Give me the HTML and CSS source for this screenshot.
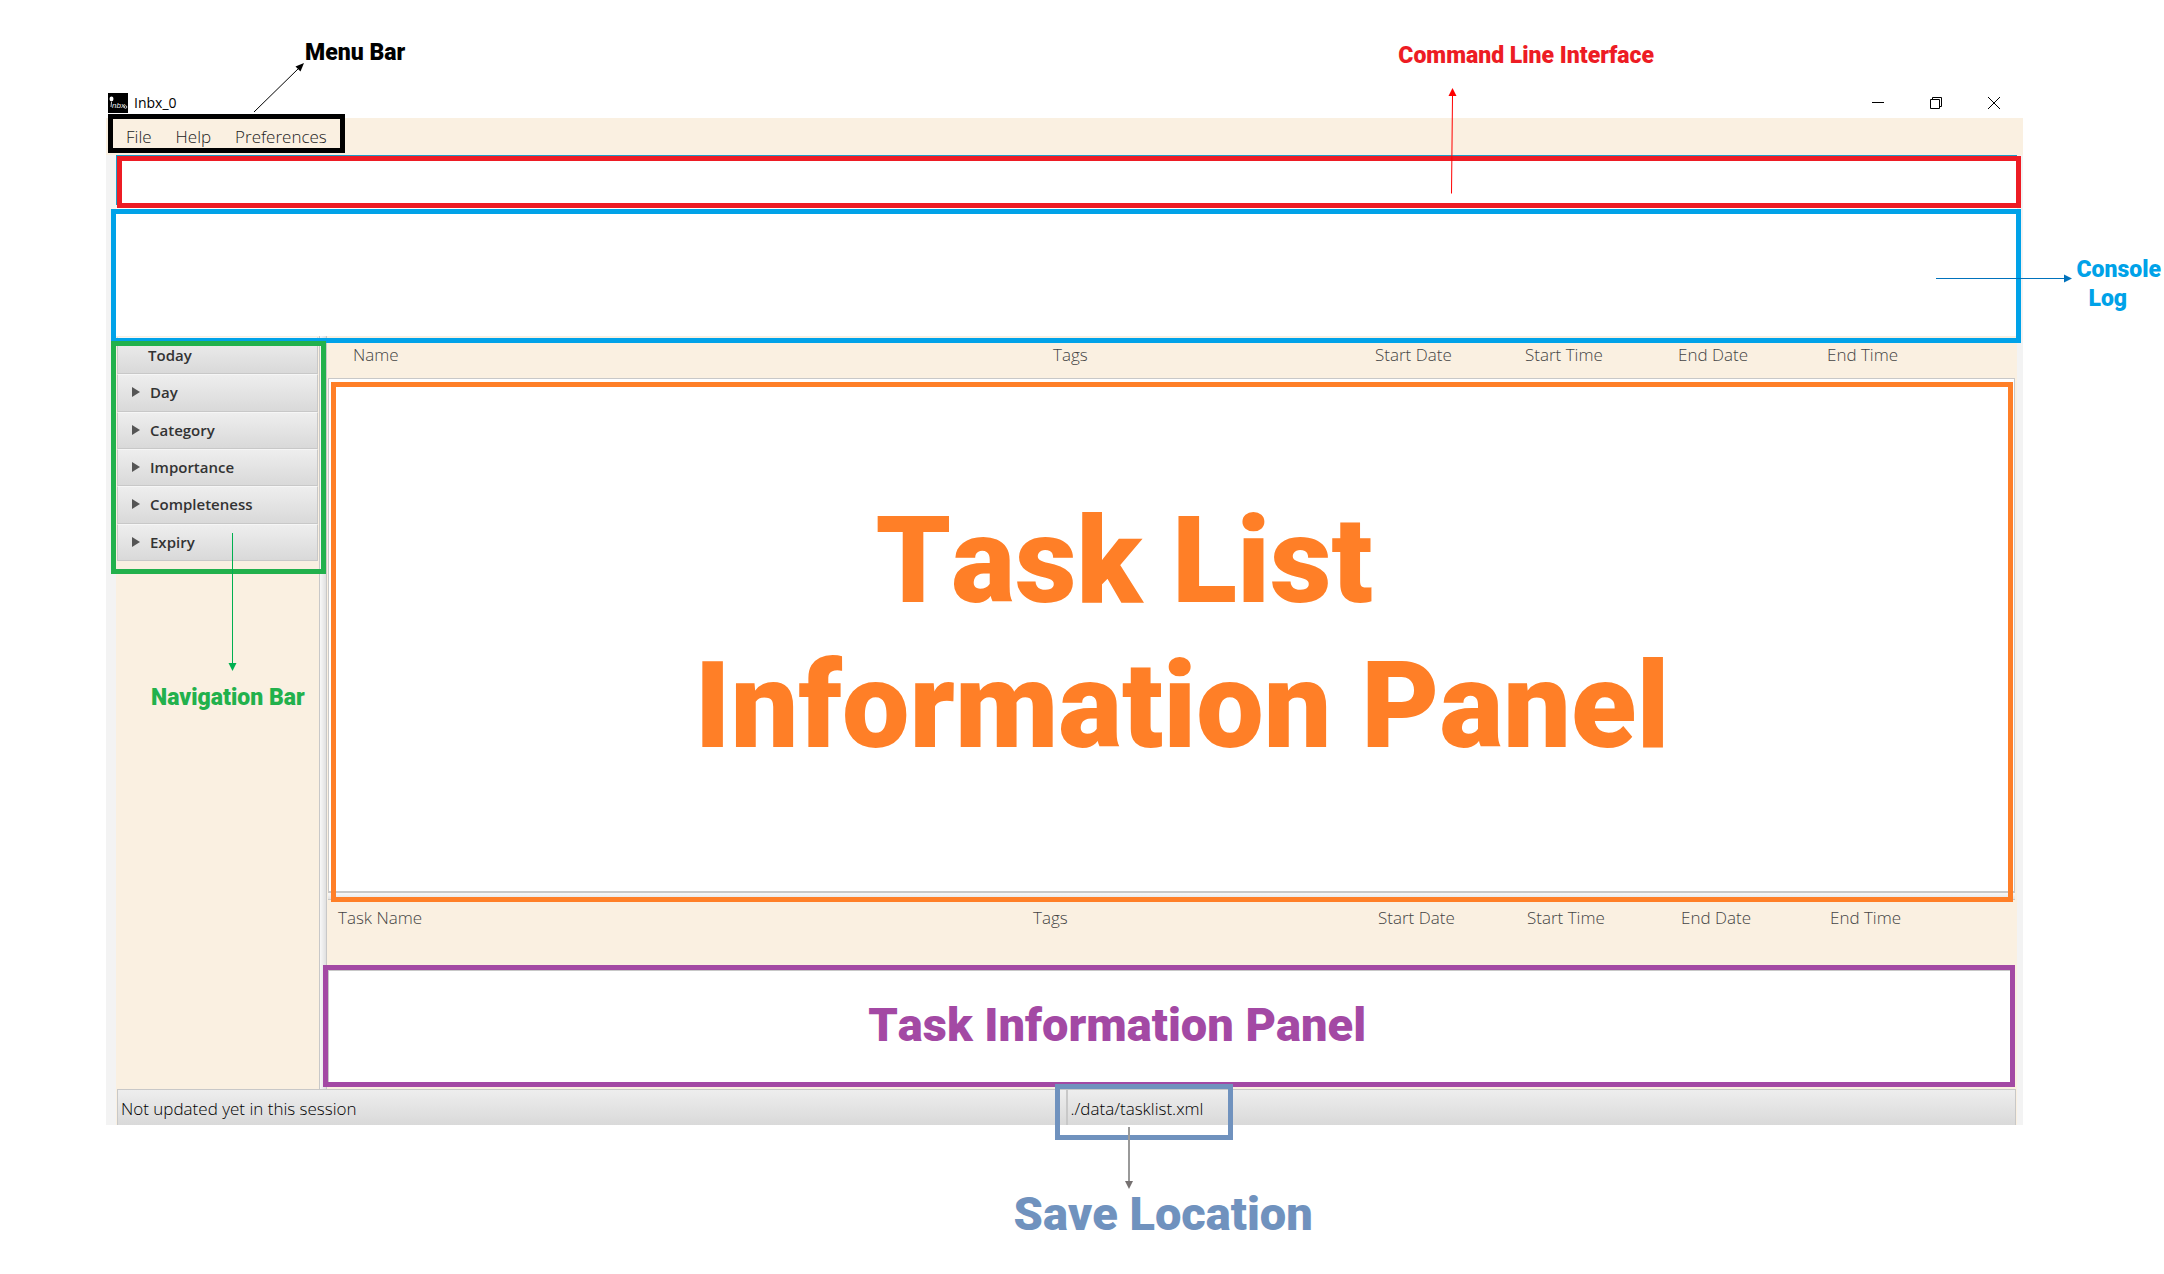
FILE: index.html
```html
<!DOCTYPE html>
<html lang="en">
<head>
<meta charset="utf-8">
<title>Inbx_0</title>
<link rel="stylesheet" href="styles.css">
</head>
<body>
<div class="app">
  <header class="titlebar">
    <svg class="logo" viewBox="0 0 20 20" aria-hidden="true">
      <rect width="20" height="20" fill="#000"/>
      <ellipse cx="3.500" cy="6" rx="2" ry="2.400" fill="#fff"/>
      <path d="M3.500 9l-.500 5" stroke="#ccc" stroke-width="1"/>
      <text x="4" y="15" class="logo-text">nbx</text>
      <circle cx="17.500" cy="14" r="1.300" fill="none" stroke="#ccc"/>
    </svg>
    <h1 class="title">Inbx_0</h1>
    <div class="controls">
      <button class="control" aria-label="Minimize"><svg viewBox="0 0 12 12"><path d="M0 5.500h12"/></svg></button>
      <button class="control" aria-label="Restore"><svg viewBox="0 0 12 12"><path d="M.5 2.500h9v9h-9zM2.500 2.500v-2h9v9h-2"/></svg></button>
      <button class="control" aria-label="Close"><svg viewBox="0 0 12 12"><path d="M0 0l12 12M12 0L0 12"/></svg></button>
    </div>
  </header>

  <nav class="menubar">
    <button class="menu">File</button>
    <button class="menu">Help</button>
    <button class="menu">Preferences</button>
    <div class="frame frame-menu"></div>
    <svg class="arrow arrow-menu" viewBox="0 0 52 52"><path class="line" d="M1 50L46 6"/><path class="head" d="M51 1L47.500 9.500L42.500 4.500z"/></svg>
    <strong class="note note-menu">Menu Bar</strong>
  </nav>

  <div class="body">
    <section class="cli">
      <input class="cli-input" type="text" aria-label="Command line">
      <div class="frame frame-cli"></div>
      <svg class="arrow arrow-cli" viewBox="0 0 10 106"><path class="line" d="M4.500 105.500L5.500 8"/><path class="head" d="M5.500 0L9.500 8h-8z"/></svg>
      <strong class="note note-cli">Command Line Interface</strong>
    </section>

    <section class="console">
      <textarea class="console-log" aria-label="Console log" readonly></textarea>
      <div class="frame frame-console"></div>
      <svg class="arrow arrow-console" viewBox="0 0 136 10"><path class="line" d="M0 5.500H128"/><path class="head" d="M136 5.500L128 9.500v-8z"/></svg>
      <strong class="note note-console">Console<span class="second">Log</span></strong>
    </section>

    <div class="split">
      <aside class="sidebar">
        <button class="group group-plain">Today</button>
        <button class="group group-tall">Day</button>
        <button class="group">Category</button>
        <button class="group">Importance</button>
        <button class="group group-tall">Completeness</button>
        <button class="group">Expiry</button>
        <div class="frame frame-nav"></div>
        <svg class="arrow arrow-nav" viewBox="0 0 10 138"><path class="line" d="M4.500 0V130"/><path class="head" d="M4.500 138L.500 130h8z"/></svg>
        <strong class="note note-nav">Navigation Bar</strong>
      </aside>
      <div class="divider"></div>
      <main class="content">
        <section class="tasks">
          <table class="heads heads-list">
            <thead><tr><th>Name</th><th class="c-tags">Tags</th><th class="c-sd">Start Date</th><th class="c-st">Start Time</th><th class="c-ed">End Date</th><th class="c-et">End Time</th></tr></thead>
          </table>
          <div class="list">
            <div class="frame frame-list"></div>
            <strong class="note note-list">Task List<span class="second">Information Panel</span></strong>
          </div>
        </section>
        <div class="divider-row"></div>
        <section class="details">
          <table class="heads heads-info">
            <thead><tr><th>Task Name</th><th class="c-tags">Tags</th><th class="c-sd">Start Date</th><th class="c-st">Start Time</th><th class="c-ed">End Date</th><th class="c-et">End Time</th></tr></thead>
          </table>
          <div class="info">
            <div class="frame frame-info"></div>
            <strong class="note note-info">Task Information Panel</strong>
          </div>
        </section>
      </main>
    </div>

    <footer class="status">
      <span class="status-cell">Not updated yet in this session</span>
      <span class="status-cell status-path">./data/tasklist.xml
        <span class="frame frame-save"></span>
        <svg class="arrow arrow-save" viewBox="0 0 10 62"><path class="line" d="M5 0V54"/><path class="head" d="M5 62L1 54h8z"/></svg>
        <strong class="note note-save">Save Location</strong>
      </span>
    </footer>
  </div>
</div>
</body>
</html>
```
FILE: styles.css
```css
* { box-sizing: border-box; }

body {
  margin: 0;
  background: #fff;
  font-family: "Open Sans", "Noto Sans", sans-serif;
  color: #222;
}

button { font-family: inherit; border: 0; background: none; }

.app {
  display: flex;
  flex-direction: column;
  min-height: 100vh;
  padding: 88px 141px 149px 106px;
  overflow: hidden;
}

/* Title bar */
.titlebar { display: flex; align-items: center; height: 30px; padding-left: 2px; }
.logo { width: 20px; height: 20px; }
.logo-text { font: italic 8px "Liberation Sans", sans-serif; fill: #eee; }
.title { margin: 0 0 0 6px; font-size: 14px; font-weight: 400; line-height: 28px; color: #000; }
.controls { display: flex; margin-left: auto; }
.control { display: grid; place-items: center; width: 58px; height: 30px; padding: 0; }
.control svg { width: 12px; height: 12px; fill: none; stroke: #000; overflow: visible; }

/* Menu bar */
.menubar {
  position: relative;
  display: flex;
  align-items: flex-start;
  gap: 24px;
  height: 37px;
  padding-left: 20px;
  background: #faf0e1;
}
.menu { padding: 0; font-size: 17px; font-weight: 300; line-height: 37px; color: #222; }

/* Body of the window */
.body { display: flex; flex: 1; flex-direction: column; padding: 0 6px 0 10px; background: #f3f3f3; }

.cli { position: relative; height: 53px; }
.cli-input {
  display: block;
  width: 100%;
  height: 50px;
  padding: 0 12px;
  border: 1px solid #1a9cc8;
  background: #fff;
  font: 300 17px "Open Sans", sans-serif;
  outline: 0;
}

.console { position: relative; height: 128px; }
.console-log {
  display: block;
  width: 100%;
  height: 100%;
  padding: 12px;
  border: 0;
  background: #fff;
  resize: none;
  font: 300 17px "Open Sans", sans-serif;
}

.split { display: flex; flex: 1; background: #faf0e1; }

.sidebar { position: relative; display: flex; flex-direction: column; width: 203px; padding: 1px 1px 0; }
.group {
  display: flex;
  align-items: center;
  gap: 10px;
  height: 37px;
  padding: 0 14px 2px;
  border: 1px solid #c8c8c8;
  border-top-color: #f6f6f6;
  background: linear-gradient(#eee, #d9d9d9);
  font-size: 15px;
  font-weight: 600;
  color: #333;
}
.group::before {
  content: "";
  border: solid transparent;
  border-width: 5px 0 5px 8px;
  border-left-color: #555;
}
.group-tall { height: 38px; }
.group-plain { padding-left: 30px; }
.group-plain::before { display: none; }

.divider {
  width: 8px;
  border: solid #c8c8c8;
  border-width: 0 1px;
  background: linear-gradient(to right, #f8f8f8, #e0e0e0);
}

.content { display: flex; flex: 1; flex-direction: column; padding: 0 2px 2px 1px; }
.tasks { display: flex; flex: 1; flex-direction: column; }

.heads { width: 100%; table-layout: fixed; border-collapse: collapse; }
.heads th {
  padding: 0;
  text-align: left;
  vertical-align: top;
  font-size: 17px;
  font-weight: 300;
  line-height: 26px;
  white-space: nowrap;
  color: #444;
}
.heads-list th { height: 42px; padding-top: 6px; }
.heads-info th { height: 70px; padding-top: 5px; }
.heads-list th:first-child { padding-left: 25px; }
.heads-info th:first-child { padding-left: 10px; }
.heads-list .c-tags { width: 322px; }
.heads-list .c-sd { width: 150px; }
.heads-list .c-st { width: 153px; }
.heads-list .c-et { width: 188px; }
.heads-info .c-tags { width: 345px; }
.heads-info .c-sd { width: 149px; }
.heads-info .c-st { width: 154px; }
.heads-info .c-et { width: 185px; }
.c-ed { width: 149px; }

.list {
  position: relative;
  flex: 1;
  border: 1px solid #c8c8c8;
  border-bottom-width: 2px;
  background: #fff;
}
.divider-row { height: 7px; border-bottom: 1px solid #c8c8c8; background: linear-gradient(#f8f8f8, #e4e4e4); }
.info { position: relative; height: 117px; border: 1px solid #c8c8c8; background: #fff; }

.status {
  display: grid;
  grid-template-columns: 1fr 1fr;
  height: 36px;
  padding: 0 1px;
  background: #faf0e1;
}
.status-cell {
  border: solid #c8c8c8;
  border-width: 1px 1px 0;
  padding: 3px 0 0 3px;
  background: linear-gradient(#eee, #d9d9d9);
  font-size: 17px;
  font-weight: 300;
  line-height: 32px;
  color: #000;
}
.status-path { position: relative; }

/* Callouts over the window */
.frame { position: absolute; z-index: 1; border: 5px solid; pointer-events: none; }
.frame-menu { inset: -4px auto 2px 2px; width: 237px; color: #000; }
.frame-cli { inset: 1px -4px 0 1px; color: #ed1c24; }
.frame-console { inset: 1px -4px -7px -5px; color: #00a2e8; }
.frame-nav { inset: 5px -7px auto -5px; height: 233px; color: #22b14c; }
.frame-list { inset: 3px 1px -11px 2px; color: #ff7f27; }
.frame-info { inset: -6px -1px -1px -6px; color: #a349a4; }
.frame-save { inset: -6px auto auto -13px; width: 178px; height: 56px; color: #7092be; }

.arrow { position: absolute; z-index: 2; overflow: visible; color: #000; }
.arrow .line { fill: none; stroke: currentColor; }
.arrow .head { fill: currentColor; }
.arrow-menu { left: 147px; top: -56px; width: 52px; height: 52px; }
.arrow-cli { right: 560px; top: -67px; width: 10px; height: 106px; color: #f00; }
.arrow-console { right: -55px; top: 65px; width: 136px; height: 10px; color: #0072bc; }
.arrow-nav { left: 112px; top: 197px; width: 10px; height: 138px; color: #00b050; }
.arrow-save { left: 56px; top: 37px; width: 10px; height: 62px; color: #767171; }
.arrow-save .line { stroke-width: 2; stroke: #999; }

.note {
  position: absolute;
  z-index: 2;
  font-family: Roboto, sans-serif;
  font-size: 23px;
  font-weight: 900;
  line-height: 29px;
  font-kerning: none;
  white-space: nowrap;
}
.note .second { display: block; }
.note-menu { left: 199px; top: -80px; color: #000; }
.note-cli { right: 363px; top: -114px; color: #ed1c24; }
.note-console { right: -144px; top: 47px; color: #00a2e8; }
.note-console .second { padding-left: 12px; }
.note-nav { left: 35px; top: 347px; color: #22b14c; }
.note-list { left: 50%; top: 110px; margin-left: -477px; font-size: 120px; line-height: 145px; color: #ff7f27; text-indent: 181px; }
.note-list .second { text-indent: 0; }
.note-info { left: 32%; top: 24px; font-size: 47px; line-height: 60px; color: #a349a4; }
.note-save { left: -54px; top: 94px; font-size: 47px; line-height: 60px; color: #7092be; }
```
